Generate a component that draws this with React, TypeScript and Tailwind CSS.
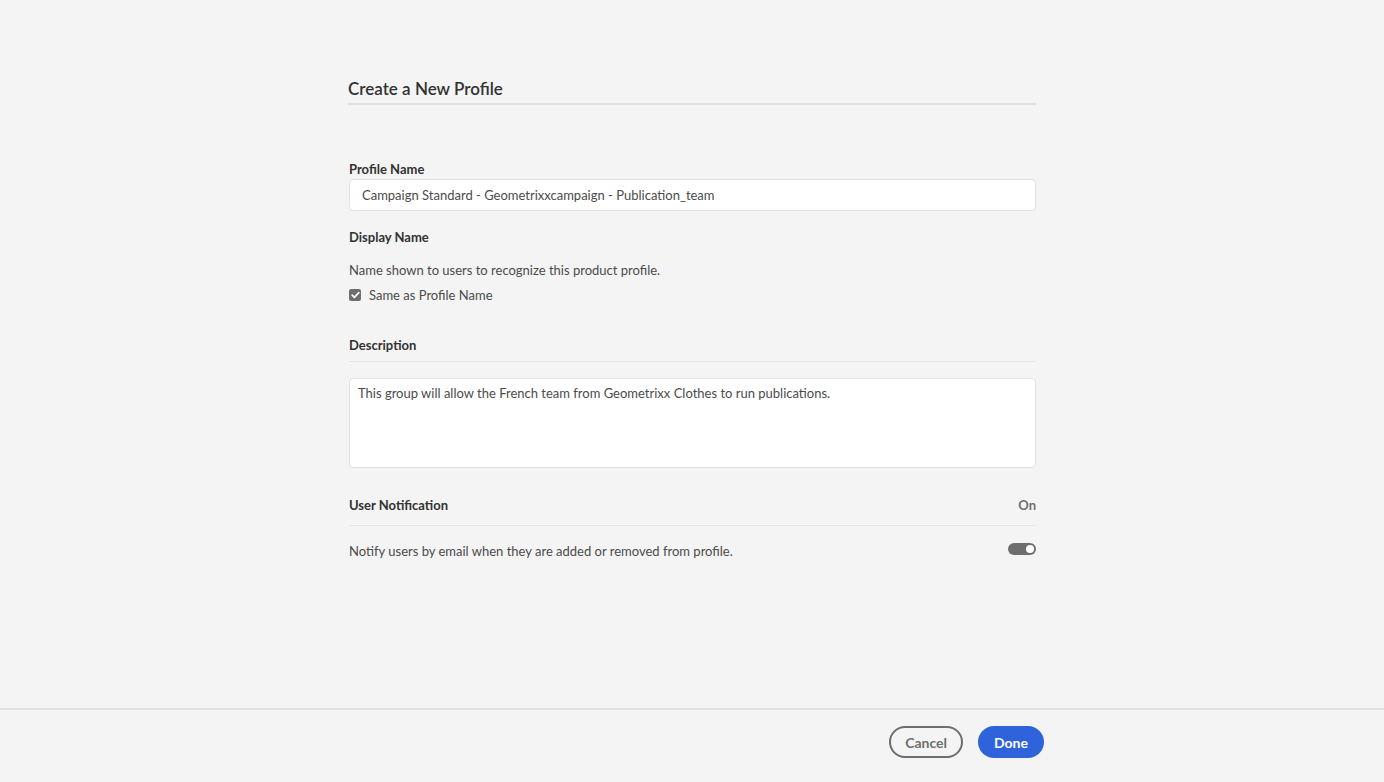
import { useState } from 'react';

export default function App() {
  const [sameAsName, setSameAsName] = useState(true);
  const [notify, setNotify] = useState(true);

  return (
    <div className="min-h-screen h-[782px] bg-[#f4f4f4] flex flex-col text-[#2c2c2c]" style={{ fontFamily: 'Lato, "Open Sans", sans-serif' }}>
      <div className="flex-1">
        <div className="w-[688px] mx-auto pt-[78px]">
          <h1 className="text-[17px] leading-[22px] font-semibold text-[#323232] pb-[3px] border-b-2 border-[#e1e1e1]">
            Create a New Profile
          </h1>

          <div className="mt-[55px] pl-px">
            <label className="block text-[13px] leading-[18px] font-bold text-[#323232]">Profile Name</label>
            <input
              defaultValue="Campaign Standard - Geometrixxcampaign - Publication_team"
              className="mt-[1px] w-full h-[32px] bg-white border border-[#e1e1e1] rounded-[4px] px-[12px] text-[13px] text-[#4b4b4b] outline-none"
            />
          </div>

          <div className="mt-[17px] pl-px">
            <div className="text-[13px] leading-[18px] font-bold text-[#323232]">Display Name</div>
            <p className="mt-[15px] text-[13px] leading-[18px] text-[#4b4b4b]">Name shown to users to recognize this product profile.</p>
            <label className="mt-[7px] flex items-center gap-[8px] text-[13px] leading-[18px] text-[#4b4b4b] cursor-pointer">
              <span
                onClick={() => setSameAsName(!sameAsName)}
                className={`w-[12px] h-[12px] rounded-[2px] flex items-center justify-center ${sameAsName ? 'bg-[#6e6e6e]' : 'border-2 border-[#6e6e6e] bg-white'}`}
              >
                {sameAsName && (
                  <svg width="9" height="8" viewBox="0 0 9 8" fill="none">
                    <path d="M1.2 4.2 L3.4 6.3 L7.8 1.6" stroke="white" strokeWidth="1.7" strokeLinecap="round" strokeLinejoin="round" />
                  </svg>
                )}
              </span>
              Same as Profile Name
            </label>
          </div>

          <div className="mt-[32px] pl-px">
            <div className="text-[13px] leading-[18px] font-bold text-[#323232] pb-[7px] border-b border-[#e6e6e6]">Description</div>
            <textarea
              defaultValue="This group will allow the French team from Geometrixx Clothes to run publications."
              className="mt-[16px] block w-full h-[90px] resize-none bg-white border border-[#e1e1e1] rounded-[4px] px-[8px] py-[5px] text-[13px] leading-[18px] text-[#4b4b4b] outline-none"
            />
          </div>

          <div className="mt-[28px] pl-px">
            <div className="flex items-center justify-between pb-[11px] border-b border-[#e6e6e6]">
              <span className="text-[13px] leading-[18px] font-bold text-[#323232]">User Notification</span>
              <span className="text-[13px] leading-[18px] font-bold text-[#6e6e6e]">{notify ? 'On' : 'Off'}</span>
            </div>
            <div className="mt-[16px] flex items-center justify-between">
              <span className="text-[13px] leading-[18px] text-[#4b4b4b]">Notify users by email when they are added or removed from profile.</span>
              <button
                onClick={() => setNotify(!notify)}
                className={`w-[28px] h-[12px] -mt-[4px] rounded-full relative ${notify ? 'bg-[#6e6e6e]' : 'bg-[#cacaca]'}`}
              >
                <span className={`absolute top-[2px] w-[8px] h-[8px] rounded-full bg-white ${notify ? 'right-[2px]' : 'left-[2px]'}`} />
              </button>
            </div>
          </div>
        </div>
      </div>

      <div className="h-[74px] border-t-2 border-[#e1e1e1] flex items-start justify-end gap-[15px] pr-[340px] pt-[16px]">
        <button className="h-[32px] px-[14px] rounded-full border-2 border-[#6e6e6e] text-[14px] font-bold text-[#6e6e6e]">
          Cancel
        </button>
        <button className="h-[32px] px-[16px] rounded-full bg-[#2f63dc] text-[14px] font-bold text-white">
          Done
        </button>
      </div>
    </div>
  );
}
